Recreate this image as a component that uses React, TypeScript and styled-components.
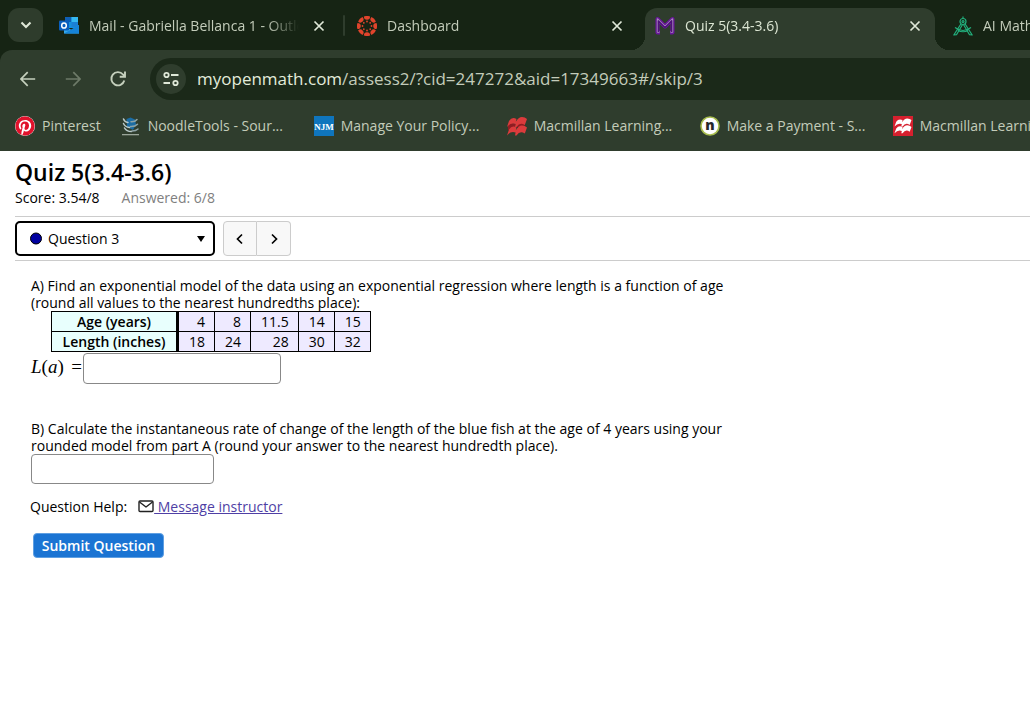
import React from "react";
import styled, { createGlobalStyle, css } from "styled-components";
import { FaPinterest } from "react-icons/fa";

const uiFont = `"Open Sans", "Noto Sans", sans-serif`;

const GlobalStyle = createGlobalStyle`
  *, *::before, *::after { box-sizing: border-box; }
  body { margin: 0; background: #fff; overflow-x: hidden; }
  button, input, select { font: inherit; color: inherit; }
`;

/* ---------- Browser chrome ---------- */

const Chrome = styled.header`
  background: #162414;
  color: #c3ccba;
  font: 14px/20px ${uiFont};
  white-space: nowrap;
  overflow: hidden;
`;

const TabStrip = styled.div`
  display: flex;
  align-items: stretch;
  height: 50px;
  padding: 8px 0 0 8px;
`;

const TabSearch = styled.button`
  flex: none;
  display: grid;
  place-items: center;
  width: 35px;
  height: 34px;
  margin-right: 6px;
  padding: 0;
  border: 0;
  border-radius: 11px;
  background: #2e3c2c;
  color: #dfe8d8;
`;

const Tab = styled.div<{ $active?: boolean }>`
  flex: none;
  position: relative;
  display: flex;
  align-items: center;
  gap: 10px;
  width: 290px;
  padding: 0 10px 7px;
  ${(p) =>
    p.$active &&
    css`
      z-index: 1;
      background: #2f3d2d;
      color: #dce6d3;
      border-radius: 12px 12px 0 0;
      &::before,
      &::after {
        content: "";
        position: absolute;
        bottom: 0;
        width: 14px;
        height: 14px;
      }
      &::before {
        right: 100%;
        background: radial-gradient(circle at 0 0, transparent 14px, #2f3d2d 14px);
      }
      &::after {
        left: 100%;
        background: radial-gradient(circle at 100% 0, transparent 14px, #2f3d2d 14px);
      }
    `}
`;

const TabTitle = styled.span`
  flex: 1;
  min-width: 0;
  overflow: hidden;
  mask-image: linear-gradient(to left, transparent, #000 32px);
`;

const TabClose = styled.button`
  flex: none;
  display: grid;
  place-items: center;
  width: 20px;
  height: 20px;
  padding: 0;
  border: 0;
  background: none;
  color: #dfe8d8;
`;

const TabGap = styled.div<{ $line?: boolean }>`
  flex: none;
  display: flex;
  justify-content: center;
  width: 8px;
  padding: 7px 2px 14px 4px;
  &::before {
    content: "";
    width: 2px;
    border-radius: 1px;
    background: ${(p) => (p.$line ? "#2f3d2d" : "transparent")};
  }
`;

const Toolbar = styled.div`
  display: flex;
  gap: 10px;
  padding: 8px 0 0 10px;
  background: #2f3d2d;
  border-radius: 12px 0 0 0;
`;

const NavButton = styled.button<{ $dim?: boolean }>`
  display: grid;
  place-items: center;
  width: 35px;
  height: 42px;
  padding: 0;
  border: 0;
  background: none;
  color: ${(p) => (p.$dim ? "#6d7a68" : "#c5d0bd")};
`;

const Omnibox = styled.div`
  flex: 1;
  display: flex;
  align-items: center;
  gap: 11px;
  height: 42px;
  margin-left: 5px;
  padding-left: 6px;
  border-radius: 21px 0 0 21px;
  background: #1b2919;
  font-size: 17px;
`;

const SiteInfo = styled.button`
  flex: none;
  display: grid;
  place-items: center;
  width: 30px;
  height: 30px;
  padding: 0;
  border: 0;
  border-radius: 50%;
  background: #2f3d2d;
  color: #dfe8d8;
`;

const UrlHost = styled.span`
  color: #e3ecdb;
`;

const Bookmarks = styled.nav`
  display: flex;
  gap: 20px;
  height: 51px;
  padding-left: 15px;
  background: #2f3d2d;
`;

const Bookmark = styled.a`
  flex: none;
  display: flex;
  align-items: center;
  gap: 7px;
  color: inherit;
  text-decoration: none;
`;

const BookmarkLabel = styled.span<{ $fixed?: boolean }>`
  width: ${(p) => (p.$fixed ? "146px" : "auto")};
`;

/* ---------- Quiz page ---------- */

const Page = styled.main`
  padding: 6px 0 24px 15px;
  color: #000;
  font: 14px/17px ${uiFont};
`;

const Title = styled.h1`
  margin: 0;
  font-size: 23px;
  line-height: 30px;
  font-weight: 600;
`;

const Meta = styled.div`
  display: flex;
  gap: 22px;
  padding: 1px 0 8px;
  line-height: 20px;
`;

const Muted = styled.span`
  color: #808080;
`;

const Selector = styled.div`
  display: flex;
  gap: 8px;
  padding: 4px 0;
  border: solid #ccc;
  border-width: 1px 0;
`;

const Picker = styled.label`
  display: flex;
  align-items: center;
  gap: 5px;
  width: 200px;
  height: 35px;
  padding: 0 8px 0 12px;
  border: 2px solid #000;
  border-radius: 5px;
`;

const PickerSelect = styled.select`
  flex: 1;
  appearance: none;
  padding: 0;
  border: 0;
  outline: 0;
  background: none;
`;

const Stepper = styled.div`
  display: flex;
`;

const StepButton = styled.button`
  display: grid;
  place-items: center;
  width: 34px;
  height: 35px;
  padding: 0;
  border: 1px solid #ccc;
  background: #f8f8f8;
  &:first-child {
    border-radius: 4px 0 0 4px;
  }
  &:last-child {
    border-left: 0;
    border-radius: 0 4px 4px 0;
  }
`;

const Question = styled.section`
  padding: 16px 16px 0;
`;

const Prompt = styled.p`
  margin: 0;
`;

const DataTable = styled.table`
  margin-left: 20px;
  border-collapse: collapse;
  line-height: 19px;
  th,
  td {
    padding: 0 9px 0 10px;
    border: 1px solid #000;
  }
  th {
    width: 126px;
    padding: 0;
    border-right-width: 3px;
    background: #e8fffd;
    font-weight: 600;
    text-align: center;
  }
  td {
    background: #eeeaff;
    text-align: right;
  }
`;

const AnswerRow = styled.label`
  display: flex;
  gap: 1px;
  margin: 1px 0 36px;
`;

const MathText = styled.span`
  display: flex;
  justify-content: space-between;
  width: 51px;
  font: 19px/28px "Liberation Serif", serif;
  white-space: nowrap;
`;

const AnswerInput = styled.input<{ $size: "wide" | "narrow" }>`
  display: block;
  width: ${(p) => (p.$size === "wide" ? 198 : 183)}px;
  height: ${(p) => (p.$size === "wide" ? 31 : 30)}px;
  padding: 4px 8px;
  border: 1px solid #888;
  border-radius: 4px;
  background: #fff;
`;

const Help = styled.div`
  display: flex;
  align-items: center;
  gap: 11px;
  margin: 13px 15px 0;
  line-height: 20px;
`;

const HelpLink = styled.a`
  display: flex;
  align-items: center;
  color: #4f3fa5;
  white-space: pre;
`;

const SubmitButton = styled.button`
  display: block;
  width: 131px;
  height: 25px;
  margin: 16px 18px 0;
  padding: 0;
  border: 1px solid #5f9fe2;
  border-radius: 4px;
  background: #1b74d3;
  color: #fff;
  font-weight: 600;
`;

/* ---------- Icons ---------- */

const Icon = styled.svg`
  flex: none;
  display: block;
`;

const stroke = (w: number) => ({
  fill: "none",
  stroke: "currentColor",
  strokeWidth: w,
});

const CloseIcon = () => (
  <Icon width="12" height="12" viewBox="0 0 12 12" {...stroke(1.7)}>
    <path d="M1.500 1.500l9 9M10.500 1.500l-9 9" />
  </Icon>
);

const OutlookIcon = () => (
  <Icon width="20" height="20" viewBox="0 0 20 20">
    <path d="M6 1h13v11H6z" fill="#1490df" />
    <path d="M6 1h6.500v5H6z" fill="#0f5fb5" />
    <path d="M12.500 1H19v5h-6.500z" fill="#35b8f1" />
    <path d="M12.500 6H19v5h-6.500z" fill="#1a80d6" />
    <path d="M5 9l7.500 5L20 9v8.500H5z" fill="#36a9ea" />
    <path d="M5 17.500L20 9v8.500z" fill="#1583d8" />
    <rect x="0" y="4.500" width="10" height="10" rx="1" fill="#0a5fbd" />
    <ellipse cx="5" cy="9.500" rx="2.300" ry="2.600" fill="none" stroke="#fff" strokeWidth="1.500" />
  </Icon>
);

const turns = [0, 45, 90, 135, 180, 225, 270, 315];

const CanvasIcon = () => (
  <Icon width="20" height="20" viewBox="0 0 20 20" fill="#e0442c">
    {turns.map((a) => (
      <g key={a} transform={`rotate(${a} 10 10)`}>
        <path d="M6.900 .5Q10-.7 13.100 .5A3.100 3.300 0 0 1 6.900 .5z" />
        <circle cx="10" cy="5.500" r=".9" />
      </g>
    ))}
  </Icon>
);

const MomIcon = () => (
  <Icon width="20" height="20" viewBox="0 0 20 20" strokeLinejoin="round" fill="none">
    <path d="M5 16.500H2.500V3L10 10.500 17.500 3v13.500H15" stroke="#6a179c" strokeWidth="4" />
    <path d="M4.500 16H2.500V3L10 10.500 17.500 3v13H15.500" stroke="#a98bbb" strokeWidth="1.400" />
    <path d="M3.300 16V4.800L10 11.500l6.700-6.700V16" stroke="#4d1278" strokeWidth="1.300" />
  </Icon>
);

const CompassIcon = () => (
  <Icon width="20" height="20" viewBox="0 0 20 20" fill="none" stroke="#22b07d" strokeWidth="1.200" strokeLinejoin="round">
    <path d="M10 .5v2" />
    <circle cx="10" cy="5.500" r="3" />
    <circle cx="10" cy="5.500" r="1" />
    <path d="M7.900 8L.8 19l2.700-.3L9.400 8.800M12.100 8l7.100 11-2.700-.3-5.900-9.900" />
    <path d="M2 11.500Q10 17.500 18 11.500M4.800 14.500Q10 17 15.200 14.500" />
  </Icon>
);

const ReloadIcon = () => (
  <Icon width="18" height="18" viewBox="0 0 18 18" {...stroke(1.9)}>
    <path d="M15.300 10.500A6.600 6.600 0 1 1 14 4.500L16 6.700M16 1.500v5.200h-5.300" />
  </Icon>
);

const ArrowIcon = ({ flip }: { flip?: boolean }) => (
  <Icon width="16" height="16" viewBox="0 0 16 16" {...stroke(1.7)}>
    <path d={flip ? "M.8 8H15M8.300 1.200L15 8l-6.700 6.800" : "M15.200 8H1M7.700 1.200L1 8l6.700 6.800"} />
  </Icon>
);

const TuneIcon = () => (
  <Icon width="16" height="16" viewBox="0 0 16 16" {...stroke(1.8)}>
    <circle cx="3.500" cy="4" r="2.200" />
    <path d="M8 4h7.500M.5 12H7" />
    <circle cx="12.500" cy="12" r="2.200" />
  </Icon>
);

const PinterestIcon = styled(FaPinterest)`
  display: block;
  width: 20px;
  height: 20px;
  border-radius: 50%;
  background: #fff;
  color: #e0122c;
`;

const NoodleIcon = () => (
  <Icon width="20" height="20" viewBox="0 0 20 20" fill="none">
    <path d="M5.500 3l4-1.500 4.500 2 1 5-3 5.500-6-3z" fill="#1b6ca3" />
    <g strokeLinecap="round" strokeWidth="1.500">
      <path d="M2.500 3q1 3 4.500 3.500M2.500 7.500q1.500 3.500 6 4M3.500 12q2 3.500 7 3.500" stroke="#b9c9c8" />
      <path d="M10 5.800q4 .3 6-2.300M9.500 10.500q4.500 .3 7-2.300M11 15q4 0 6-2" stroke="#8ea3a6" />
    </g>
    <path d="M1 18.700h17" stroke="#aeb9ad" strokeWidth="1.100" />
  </Icon>
);

const NjmIcon = () => (
  <Icon width="20" height="20" viewBox="0 0 20 20">
    <rect width="20" height="20" fill="#0f75bd" />
    <text x="10" y="13.500" textAnchor="middle" fill="#fff" fontFamily="Liberation Serif, serif" fontWeight="700" fontSize="9">
      NJM
    </text>
  </Icon>
);

const waveBand = "M0 10L2 4Q5-.5 9.500 2L8.800 4.800Q11.500 0 15 0Q18 .2 20 2L17.800 8Q13 4.500 9.500 10H8L8.600 7Q4 5 0 10z";

const MacmillanIcon = ({ solid }: { solid?: boolean }) => (
  <Icon width="20" height="20" viewBox="0 0 20 20" fill={solid ? "#fff" : "#dc3b3c"}>
    {solid && <rect width="20" height="20" fill="#d6202e" />}
    <g transform={solid ? "translate(1.500 2.500) scale(.85 .8)" : "translate(0 1)"}>
      {!solid && <path d="M1 8L4 6 8.500 7 8 11l3-4 4-1.500 3 1.500-1 4-7-1-3 2-6 1z" fill="#8f1d22" />}
      <path d={waveBand} />
      <path d={waveBand} transform="translate(0 8.500)" />
    </g>
  </Icon>
);

const NelnetIcon = () => (
  <Icon width="20" height="20" viewBox="0 0 20 20">
    <circle cx="10" cy="10" r="9" fill="#fff" stroke="#a7bd4d" strokeWidth="1.600" />
    <text x="10" y="14" textAnchor="middle" fill="#25282b" fontFamily="Open Sans, sans-serif" fontWeight="800" fontSize="14">
      n
    </text>
  </Icon>
);

const Chevron = ({ d, w = 1.7 }: { d: string; w?: number }) => (
  <Icon width="12" height="12" viewBox="0 0 12 12" {...stroke(w)}>
    <path d={d} />
  </Icon>
);

const MailIcon = () => (
  <Icon width="16" height="14" viewBox="0 0 16 14" fill="none" stroke="#222" strokeWidth="1.400" strokeLinejoin="round">
    <rect x="1" y="1" width="14" height="10.500" rx="1" />
    <path d="M1.500 2L8 7l6.500-5" />
  </Icon>
);

/* ---------- Data ---------- */

const tabs = [
  { title: "Mail - Gabriella Bellanca 1 - Outlook", icon: <OutlookIcon />, line: true },
  { title: "Dashboard", icon: <CanvasIcon /> },
  { title: "Quiz 5(3.4-3.6)", icon: <MomIcon />, active: true },
  { title: "AI Math Solver", icon: <CompassIcon /> },
];

const bookmarks = [
  { label: "Pinterest", icon: <PinterestIcon /> },
  { label: "NoodleTools - Sour...", icon: <NoodleIcon />, fixed: true },
  { label: "Manage Your Policy...", icon: <NjmIcon />, fixed: true },
  { label: "Macmillan Learning...", icon: <MacmillanIcon />, fixed: true },
  { label: "Make a Payment - S...", icon: <NelnetIcon />, fixed: true },
  { label: "Macmillan Learning...", icon: <MacmillanIcon solid />, fixed: true },
];

const rows = [
  { name: "Age (years)", values: [4, 8, 11.5, 14, 15] },
  { name: "Length (inches)", values: [18, 24, 28, 30, 32] },
];

export default function App() {
  return (
    <>
      <GlobalStyle />
      <Chrome>
        <TabStrip>
          <TabSearch aria-label="Search tabs">
            <Chevron d="M1.500 3.500L6 8l4.500-4.500" w={2.1} />
          </TabSearch>
          {tabs.map((t) => (
            <React.Fragment key={t.title}>
              <Tab $active={t.active}>
                {t.icon}
                <TabTitle>{t.title}</TabTitle>
                <TabClose aria-label={`Close ${t.title}`}>
                  <CloseIcon />
                </TabClose>
              </Tab>
              <TabGap $line={t.line} />
            </React.Fragment>
          ))}
        </TabStrip>
        <Toolbar>
          <NavButton aria-label="Back">
            <ArrowIcon />
          </NavButton>
          <NavButton aria-label="Forward" $dim>
            <ArrowIcon flip />
          </NavButton>
          <NavButton aria-label="Reload">
            <ReloadIcon />
          </NavButton>
          <Omnibox>
            <SiteInfo aria-label="Site information">
              <TuneIcon />
            </SiteInfo>
            <span>
              <UrlHost>myopenmath.com</UrlHost>/assess2/?cid=247272&amp;aid=17349663#/skip/3
            </span>
          </Omnibox>
        </Toolbar>
        <Bookmarks>
          {bookmarks.map((b, i) => (
            <Bookmark key={i} href="#">
              {b.icon}
              <BookmarkLabel $fixed={b.fixed}>{b.label}</BookmarkLabel>
            </Bookmark>
          ))}
        </Bookmarks>
      </Chrome>

      <Page>
        <Title>Quiz 5(3.4-3.6)</Title>
        <Meta>
          <span>Score: 3.54/8</span>
          <Muted>Answered: 6/8</Muted>
        </Meta>
        <Selector>
          <Picker>
            <Icon width="14" height="14" viewBox="0 0 14 14">
              <circle cx="7" cy="6.500" r="5.500" fill="#0000a0" stroke="#000" />
            </Icon>
            <PickerSelect aria-label="Question">
              <option>Question 3</option>
            </PickerSelect>
            <Icon width="8" height="6" viewBox="0 0 8 6">
              <path d="M0 0h8L4 6z" />
            </Icon>
          </Picker>
          <Stepper>
            <StepButton aria-label="Previous question">
              <Chevron d="M8 1.500L3.500 6 8 10.500" />
            </StepButton>
            <StepButton aria-label="Next question">
              <Chevron d="M4 1.500L8.500 6 4 10.500" />
            </StepButton>
          </Stepper>
        </Selector>

        <Question>
          <Prompt>
            A) Find an exponential model of the data using an exponential regression where length is a function of age
            <br />
            (round all values to the nearest hundredths place):
          </Prompt>
          <DataTable>
            <tbody>
              {rows.map((r) => (
                <tr key={r.name}>
                  <th scope="row">{r.name}</th>
                  {r.values.map((v) => (
                    <td key={v}>{v}</td>
                  ))}
                </tr>
              ))}
            </tbody>
          </DataTable>
          <AnswerRow>
            <MathText>
              <span>
                <i>L</i>(<i>a</i>)
              </span>
              <span>=</span>
            </MathText>
            <AnswerInput $size="wide" type="text" />
          </AnswerRow>
          <Prompt>
            B) Calculate the instantaneous rate of change of the length of the blue fish at the age of 4 years using your
            <br />
            rounded model from part A (round your answer to the nearest hundredth place).
          </Prompt>
          <AnswerInput $size="narrow" type="text" aria-label="Answer to part B" />
        </Question>

        <Help>
          <span>Question Help:</span>
          <HelpLink href="#">
            <MailIcon />
            <span> Message instructor</span>
          </HelpLink>
        </Help>
        <SubmitButton>Submit Question</SubmitButton>
      </Page>
    </>
  );
}
